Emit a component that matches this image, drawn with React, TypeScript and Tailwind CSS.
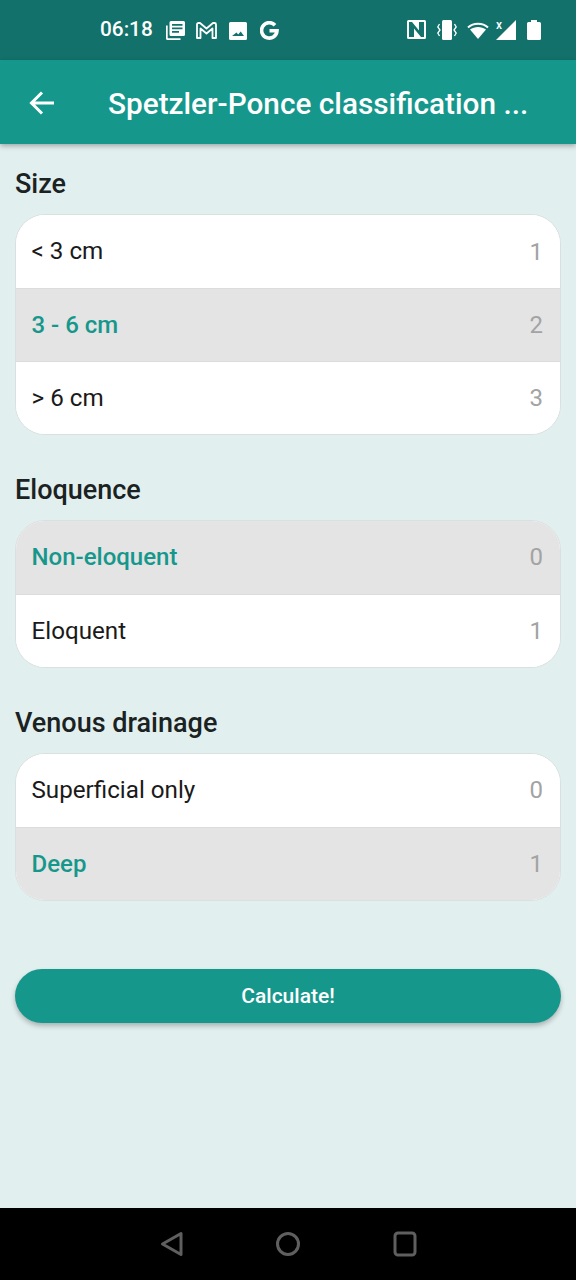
const sections = [
  {
    title: 'Size',
    rows: [
      { label: '< 3 cm', score: 1 },
      { label: '3 - 6 cm', score: 2, selected: true },
      { label: '> 6 cm', score: 3 },
    ],
  },
  {
    title: 'Eloquence',
    rows: [
      { label: 'Non-eloquent', score: 0, selected: true },
      { label: 'Eloquent', score: 1 },
    ],
  },
  {
    title: 'Venous drainage',
    rows: [
      { label: 'Superficial only', score: 0 },
      { label: 'Deep', score: 1, selected: true },
    ],
  },
]

function StatusBar() {
  return (
    <div className="h-[60px] bg-[#12716b] flex items-center text-white shrink-0">
      <span className="ml-[100px] w-[53px] text-[20.800px] leading-none font-medium mt-[-1px]">06:18</span>
      <div className="ml-[13px] flex items-center">
        {/* news */}
        <svg width="19" height="20" viewBox="0 0 19 20" fill="white" className="mt-[1px]">
          <path d="M0 4.500h1.700V17.300H14.500V19H1.500A1.500 1.500 0 0 1 0 17.500z" />
          <path fillRule="evenodd" d="M5 0h12.500A1.500 1.500 0 0 1 19 1.500v12a1.500 1.500 0 0 1-1.500 1.500H5a1.500 1.500 0 0 1-1.500-1.500v-12A1.500 1.500 0 0 1 5 0zM6 3v1.800h10.500V3zM6 6.500v1.800h10.500V6.500zM6 10v1.800h7V10z" />
        </svg>
        {/* gmail */}
        <svg width="21" height="17" viewBox="0 0 21 17" fill="none" stroke="white" strokeWidth="1.800" strokeLinejoin="round" className="ml-[11px] mt-[1px]">
          <path d="M1 16V2.500Q1 1 2.500 1H4L10.500 6.500L17 1H18.500Q20 1 20 2.500V16H16.500V6.500L10.500 11.500L4.500 6.500V16Z" />
        </svg>
        {/* image */}
        <svg width="18" height="18" viewBox="0 0 18 18" fill="white" className="ml-[12px] mt-[1px]">
          <path fillRule="evenodd" d="M1.500 0h15A1.500 1.500 0 0 1 18 1.500v15a1.500 1.500 0 0 1-1.500 1.500h-15A1.500 1.500 0 0 1 0 16.500v-15A1.500 1.500 0 0 1 1.500 0zM3 14h12l-3.300-4.500-2.500 3-1.700-2z" />
        </svg>
        {/* google */}
        <svg width="19" height="19" viewBox="0 0 19 19" fill="none" stroke="white" strokeWidth="3.600" className="ml-[13px] mt-[1px]">
          <path d="M15 4.200A7.700 7.700 0 1 0 17 9.700H9.500" />
        </svg>
      </div>
      <div className="ml-auto mr-[35px] flex items-center">
        {/* nfc */}
        <svg width="19" height="19" viewBox="0 0 19 19" className="mr-[11px] mt-[-1px]">
          <path fill="white" fillRule="evenodd" d="M1.500 0h16A1.500 1.500 0 0 1 19 1.500v16a1.500 1.500 0 0 1-1.500 1.500h-16A1.500 1.500 0 0 1 0 17.500v-16A1.500 1.500 0 0 1 1.500 0zM2 2v15h5V8.500L14 17h3V2h-5v8.500L5 2z" />
        </svg>
        {/* vibrate */}
        <svg width="20" height="20" viewBox="0 0 20 20" className="mr-[10px] mt-[-1px]">
          <rect x="5" y="0" width="10" height="20" rx="1.500" fill="white" />
          <path d="M2.500 4L0.800 7l2.200 3L0.800 13l1.700 3M17.500 4l1.700 3L17 10l2.200 3-1.700 3" fill="none" stroke="white" strokeWidth="1.300" />
        </svg>
        {/* wifi */}
        <svg width="22" height="17" viewBox="0 0 22 17" className="mr-[7px]">
          <path d="M1 5.600C6.500 0.600 15.500 0.600 21 5.600" fill="none" stroke="white" strokeWidth="2" />
          <path fill="white" d="M3 7.500C7.500 4 14.500 4 19 7.500L11 17z" />
        </svg>
        {/* signal */}
        <div className="relative w-[20px] h-[20px] mr-[11px] mt-[-1px]">
          <svg width="20" height="20" viewBox="0 0 20 20" className="absolute inset-0">
            <path fill="white" d="M20 0V20H0z" />
          </svg>
          <span className="absolute left-0 top-[-1px] text-[12px] leading-none font-medium">x</span>
        </div>
        {/* battery */}
        <svg width="14" height="20" viewBox="0 0 14 20" fill="white" className="mt-[-1px]">
          <path d="M4 0h6v2h2.500A1.500 1.500 0 0 1 14 3.500v15a1.500 1.500 0 0 1-1.500 1.500h-11A1.500 1.500 0 0 1 0 18.500v-15A1.500 1.500 0 0 1 1.500 2H4z" />
        </svg>
      </div>
    </div>
  )
}

function Option({ label, score, selected }: { label: string; score: number; selected?: boolean }) {
  return (
    <div
      className={`h-[73px] flex items-center justify-between pl-[15.500px] pr-[17px] border-t border-[#dcdcdc] first:border-t-0 ${
        selected ? 'bg-[#e4e4e4] text-[#16978c] font-medium text-[24px]' : 'bg-white text-[#1a1a1a] text-[24.200px]'
      }`}
    >
      <span className="leading-none">{label}</span>
      <span className="text-[24px] leading-none font-normal text-[#a3a3a3]">{score}</span>
    </div>
  )
}

export default function App() {
  return (
    <div className="w-[576px] h-[1280px] flex flex-col bg-[#e2efef] overflow-hidden font-['Roboto',sans-serif]">
      <StatusBar />
      <div className="relative z-10 h-[84px] shrink-0 bg-[#16978c] flex items-center text-white shadow-[0_2px_5px_rgba(0,0,0,0.3)]">
        <svg width="28" height="28" viewBox="0 0 28 28" fill="none" stroke="white" strokeWidth="3" className="ml-[28px] mt-[2px]">
          <path d="M26 14H4M14 3.500L3.500 14 14 24.500" />
        </svg>
        <span className="ml-[52px] mt-[3px] text-[29.750px] font-medium leading-none whitespace-nowrap">Spetzler-Ponce classification ...</span>
      </div>

      <div className="flex-1 px-[15px] pt-[23px]">
        {sections.map(s => (
          <div key={s.title} className="mb-[37.800px]">
            <h2 className="h-[33px] mb-[14px] text-[27px] leading-[35px] font-medium text-[#1a2222]">{s.title}</h2>
            <div className="rounded-[30px] overflow-hidden border border-[#dadfdf] bg-white">
              {s.rows.map(r => (
                <Option key={r.label} {...r} />
              ))}
            </div>
          </div>
        ))}
        <button className="block mt-[68.500px] pt-[1px] w-full h-[54px] rounded-full bg-[#16978c] text-white text-[21px] font-medium shadow-[0_3px_5px_rgba(0,0,0,0.25)]">
          Calculate!
        </button>
      </div>

      <div className="h-[72px] shrink-0 bg-black flex items-center justify-center gap-[91px]">
        <svg width="24" height="26" viewBox="0 0 24 26" fill="none" stroke="#5f5f5f" strokeWidth="3" strokeLinejoin="round">
          <path d="M21 2.500V23.500L2.500 13z" />
        </svg>
        <svg width="26" height="26" viewBox="0 0 26 26" fill="none" stroke="#5f5f5f" strokeWidth="3">
          <circle cx="13" cy="13" r="10.500" />
        </svg>
        <svg width="24" height="26" viewBox="0 0 24 26" fill="none" stroke="#5f5f5f" strokeWidth="3" className="ml-[1px]">
          <rect x="2" y="2" width="20" height="22" rx="3" />
        </svg>
      </div>
    </div>
  )
}
